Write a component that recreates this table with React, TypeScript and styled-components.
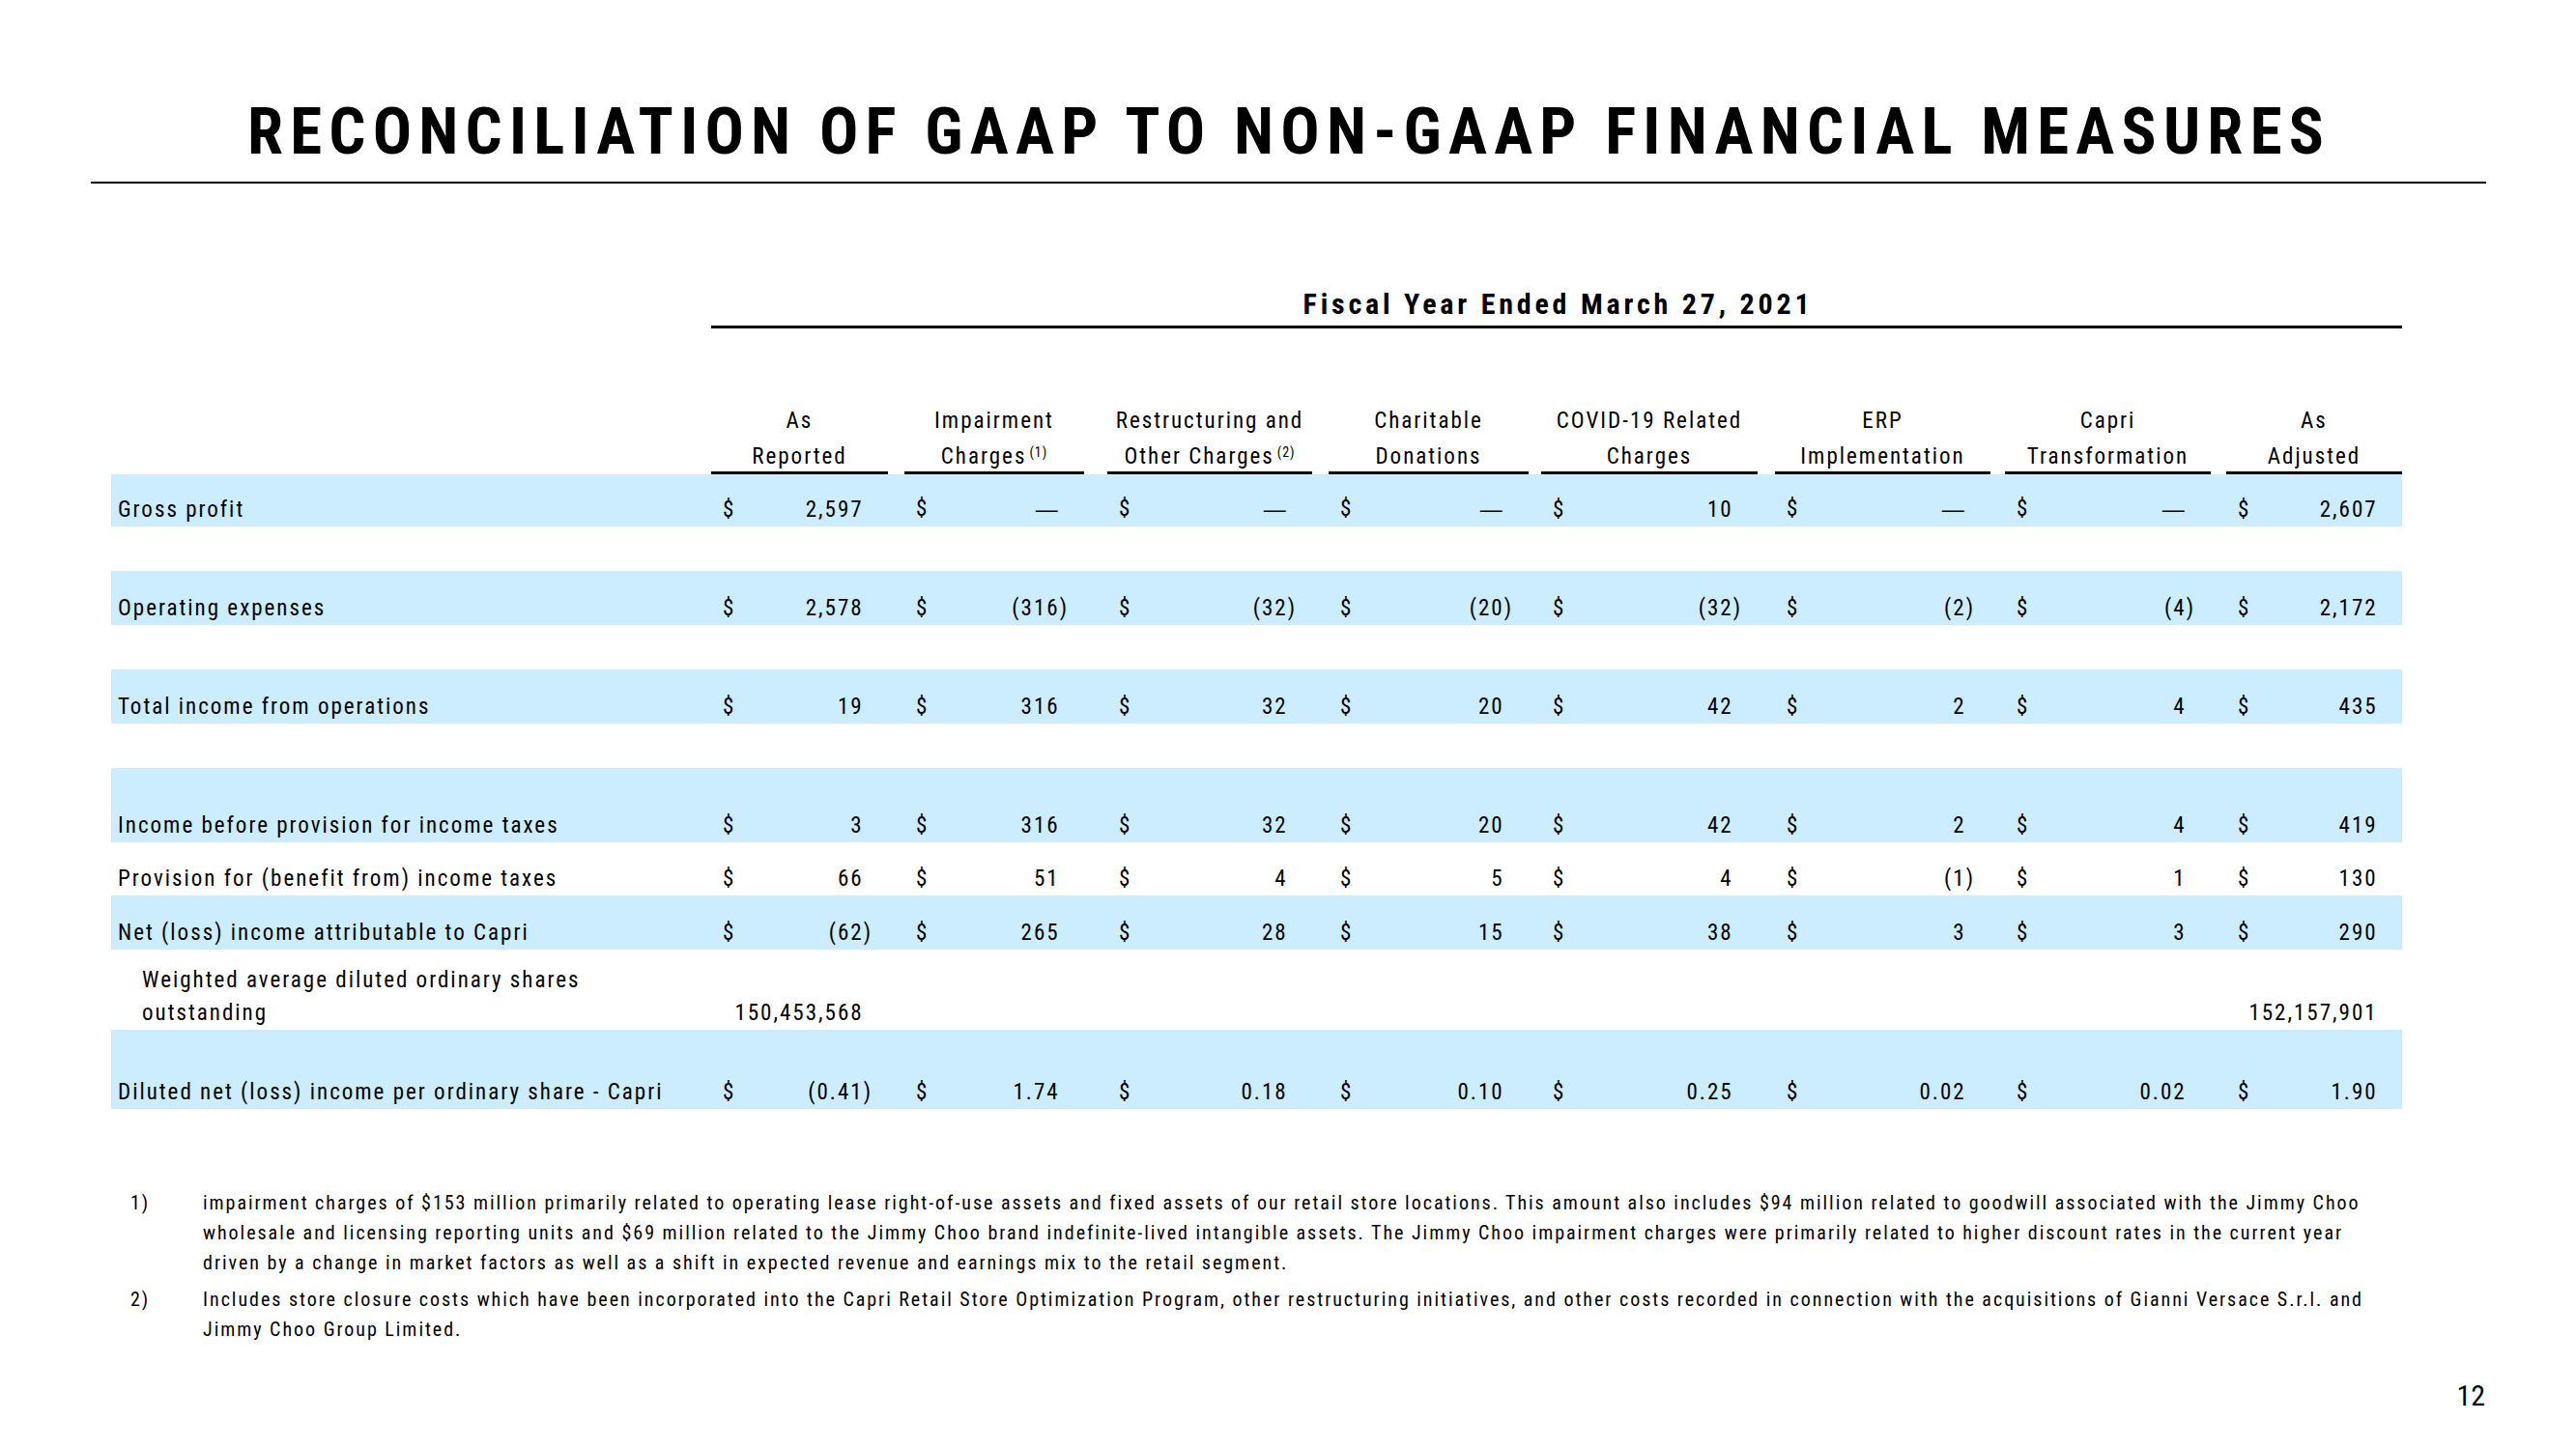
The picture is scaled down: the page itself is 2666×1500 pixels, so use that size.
import React from "react";
import styled, { createGlobalStyle } from "styled-components";

const FONT = `"Roboto Condensed", "Roboto", "Liberation Sans", Arial, sans-serif`;

const GlobalStyle = createGlobalStyle`
  html, body { margin: 0; padding: 0; background: #ffffff; }
  body { font-family: ${FONT}; font-stretch: condensed; color: #000000; }
`;

const COLS = "621px 200px 210px 229px 220px 242px 238px 229px 182px";
const GAPS = [17, 24, 17, 13, 18, 15, 16, 0];
const FILL = "#CCECFF";

const Page = styled.div`
  width: 2666px;
  height: 1500px;
  display: flex;
  flex-direction: column;
  overflow: hidden;
`;

const TitleBlock = styled.header`
  margin: 0 93px 0 94px;
  padding: 103px 0 18px;
  border-bottom: 2px solid #000;
`;

const Title = styled.h1`
  margin: 0;
  padding-left: 1px;
  font-size: 67px;
  line-height: 67px;
  font-weight: 700;
  letter-spacing: 7.2px;
  text-align: center;
  white-space: nowrap;
`;

const Table = styled.section`
  margin: 110px 0 0 115px;
  width: 2371px;
  font-size: 23px;
  letter-spacing: 2px;
`;

const CaptionRow = styled.div`
  display: grid;
  grid-template-columns: ${COLS};
`;

const Caption = styled.div`
  grid-column: 2 / -1;
  text-align: center;
  font-size: 30px;
  line-height: 30px;
  font-weight: 700;
  letter-spacing: 3.8px;
  padding: 0 0 7px 3px;
  border-bottom: 3px solid #000;
  white-space: nowrap;
`;

const HeadRow = styled.div`
  display: grid;
  grid-template-columns: ${COLS};
  margin-top: 81px;
`;

const HeadCell = styled.div<{ $gap: number }>`
  padding-right: ${(p) => p.$gap}px;
`;

const HeadInner = styled.div`
  display: flex;
  flex-direction: column;
  align-items: center;
  gap: 7px;
  border-bottom: 3px solid #000;
`;

const HeadLine = styled.span`
  line-height: 30px;
  white-space: nowrap;
`;

const Sup = styled.span`
  font-size: 14px;
  letter-spacing: 1px;
  vertical-align: 7px;
  line-height: 0;
  margin-left: 3px;
`;

const Row = styled.div<{ $h: number; $fill?: boolean }>`
  display: grid;
  grid-template-columns: ${COLS};
  align-items: end;
  height: ${(p) => p.$h}px;
  background: ${(p) => (p.$fill ? FILL : "transparent")};
  line-height: 34px;
`;

const Label = styled.div<{ $indent?: boolean }>`
  padding-left: ${(p) => (p.$indent ? 32 : 7)}px;
  white-space: nowrap;
`;

const Cell = styled.div<{ $gap: number; $plain?: boolean }>`
  display: flex;
  justify-content: ${(p) => (p.$plain ? "flex-end" : "space-between")};
  padding: 0 ${(p) => p.$gap + 16}px 0 12px;
  white-space: nowrap;
`;

const Paren = styled.span<{ $hidden?: boolean }>`
  visibility: ${(p) => (p.$hidden ? "hidden" : "visible")};
`;

const Dash = styled.span`
  font-family: "Liberation Sans", Arial, sans-serif;
  letter-spacing: 0;
  margin-right: 2px;
`;

const Notes = styled.section`
  margin-top: 82px;
  padding-left: 135px;
  font-size: 20px;
  line-height: 31px;
  letter-spacing: 1.97px;
  display: flex;
  flex-direction: column;
  gap: 7px;
`;

const Note = styled.div`
  display: grid;
  grid-template-columns: 75px 1fr;
`;

const NoteLine = styled.span`
  display: block;
  white-space: nowrap;
`;

const Footer = styled.footer`
  margin-top: auto;
  padding: 0 94px 40px 0;
  display: flex;
  justify-content: flex-end;
  font-size: 30px;
  line-height: 30px;
`;

type Head = { l1: string; l2: string; sup?: string };

const HEADS: Head[] = [
  { l1: "As", l2: "Reported" },
  { l1: "Impairment", l2: "Charges", sup: "(1)" },
  { l1: "Restructuring and", l2: "Other Charges", sup: "(2)" },
  { l1: "Charitable", l2: "Donations" },
  { l1: "COVID-19 Related", l2: "Charges" },
  { l1: "ERP", l2: "Implementation" },
  { l1: "Capri", l2: "Transformation" },
  { l1: "As", l2: "Adjusted" },
];

type DataRow = {
  label?: React.ReactNode;
  values?: string[];
  h: number;
  fill?: boolean;
  indent?: boolean;
  plain?: boolean;
};

const D = "—";

const ROWS: DataRow[] = [
  { label: "Gross profit", values: ["2,597", D, D, D, "10", D, D, "2,607"], h: 54, fill: true },
  { h: 46 },
  { label: "Operating expenses", values: ["2,578", "(316)", "(32)", "(20)", "(32)", "(2)", "(4)", "2,172"], h: 56, fill: true },
  { h: 46 },
  { label: "Total income from operations", values: ["19", "316", "32", "20", "42", "2", "4", "435"], h: 56, fill: true },
  { h: 46 },
  { label: "Income before provision for income taxes", values: ["3", "316", "32", "20", "42", "2", "4", "419"], h: 77, fill: true },
  { label: "Provision for (benefit from) income taxes", values: ["66", "51", "4", "5", "4", "(1)", "1", "130"], h: 55 },
  { label: "Net (loss) income attributable to Capri", values: ["(62)", "265", "28", "15", "38", "3", "3", "290"], h: 56, fill: true },
  {
    label: (
      <>
        Weighted average diluted ordinary shares
        <br />
        outstanding
      </>
    ),
    values: ["150,453,568", "", "", "", "", "", "", "152,157,901"],
    h: 83,
    indent: true,
    plain: true,
  },
  { label: "Diluted net (loss) income per ordinary share - Capri", values: ["(0.41)", "1.74", "0.18", "0.10", "0.25", "0.02", "0.02", "1.90"], h: 82, fill: true },
];

function Value({ v }: { v: string }) {
  if (!v) return null;
  if (v === D) {
    return (
      <span>
        <Dash>{D}</Dash>
        <Paren $hidden>)</Paren>
      </span>
    );
  }
  const neg = v.startsWith("(");
  const body = neg ? v.slice(0, -1) : v;
  return (
    <span>
      {body}
      <Paren $hidden={!neg}>)</Paren>
    </span>
  );
}

export default function App() {
  return (
    <>
      <GlobalStyle />
      <Page>
        <TitleBlock>
          <Title>RECONCILIATION OF GAAP TO NON-GAAP FINANCIAL MEASURES</Title>
        </TitleBlock>

        <Table>
          <CaptionRow>
            <Caption>Fiscal Year Ended March 27, 2021</Caption>
          </CaptionRow>

          <HeadRow>
            <div />
            {HEADS.map((h, i) => (
              <HeadCell key={i} $gap={GAPS[i]}>
                <HeadInner>
                  <HeadLine>{h.l1}</HeadLine>
                  <HeadLine>
                    {h.l2}
                    {h.sup && <Sup>{h.sup}</Sup>}
                  </HeadLine>
                </HeadInner>
              </HeadCell>
            ))}
          </HeadRow>

          {ROWS.map((r, ri) => (
            <Row key={ri} $h={r.h} $fill={r.fill}>
              {r.label ? <Label $indent={r.indent}>{r.label}</Label> : <div />}
              {r.values &&
                r.values.map((v, i) => (
                  <Cell key={i} $gap={GAPS[i]} $plain={r.plain}>
                    {!r.plain && <span>$</span>}
                    <Value v={v} />
                  </Cell>
                ))}
            </Row>
          ))}
        </Table>

        <Notes>
          <Note>
            <span>1)</span>
            <div>
              <NoteLine>
                impairment charges of $153 million primarily related to operating lease right-of-use assets and fixed assets of our retail store locations. This amount also includes $94 million related to goodwill associated with the Jimmy Choo
              </NoteLine>
              <NoteLine>
                wholesale and licensing reporting units and $69 million related to the Jimmy Choo brand indefinite-lived intangible assets. The Jimmy Choo impairment charges were primarily related to higher discount rates in the current year
              </NoteLine>
              <NoteLine>
                driven by a change in market factors as well as a shift in expected revenue and earnings mix to the retail segment.
              </NoteLine>
            </div>
          </Note>
          <Note>
            <span>2)</span>
            <div>
              <NoteLine>
                Includes store closure costs which have been incorporated into the Capri Retail Store Optimization Program, other restructuring initiatives, and other costs recorded in connection with the acquisitions of Gianni Versace S.r.l. and
              </NoteLine>
              <NoteLine>Jimmy Choo Group Limited.</NoteLine>
            </div>
          </Note>
        </Notes>

        <Footer>12</Footer>
      </Page>
    </>
  );
}
